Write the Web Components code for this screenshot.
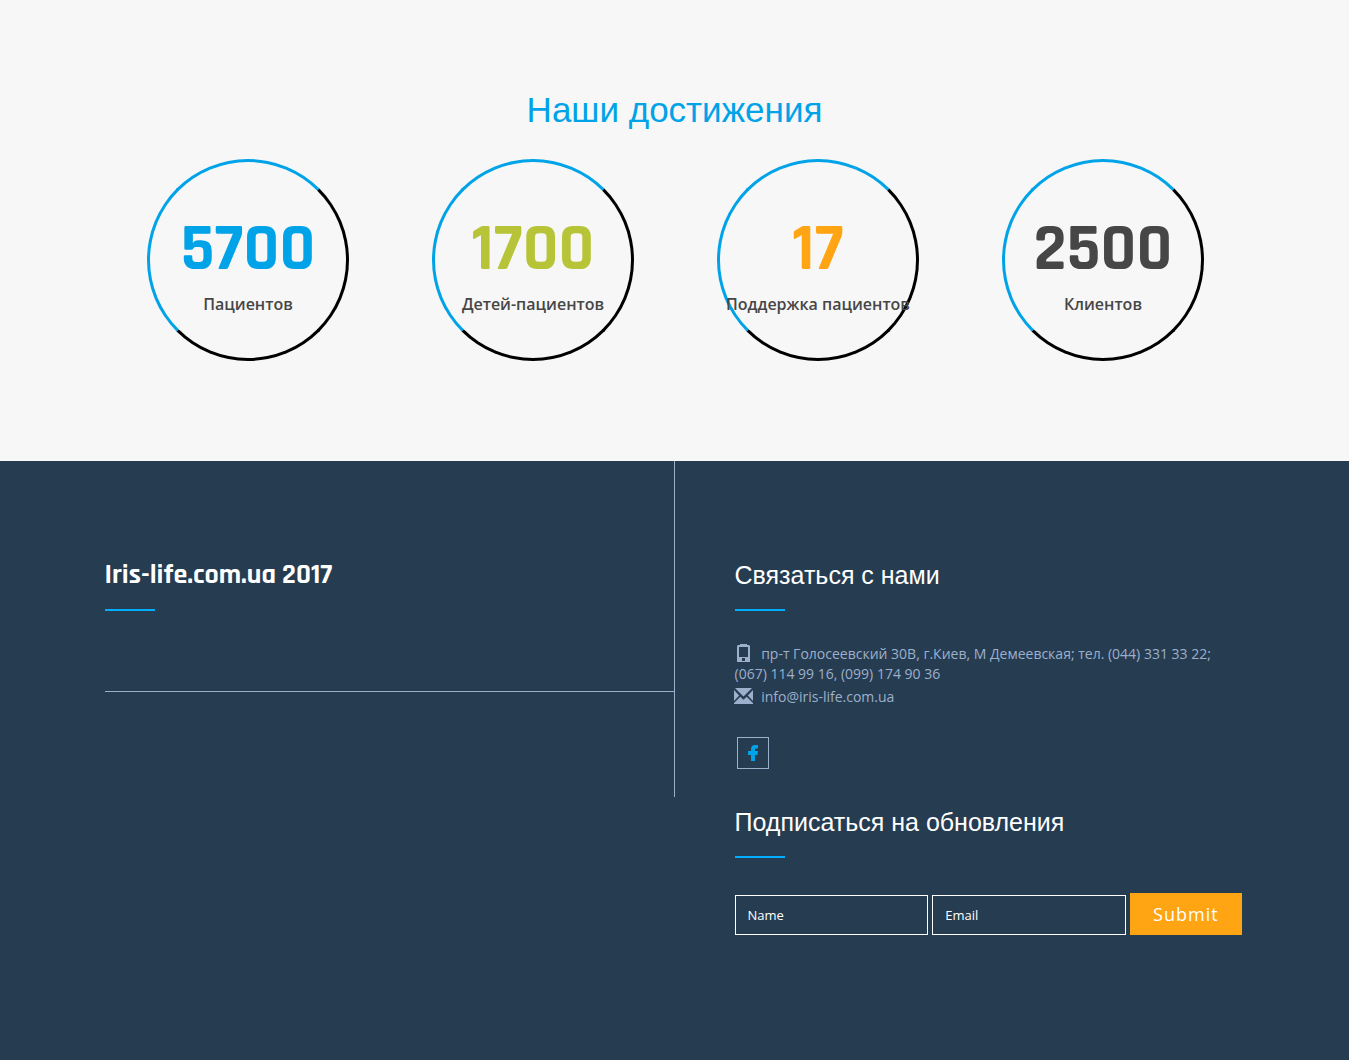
<!DOCTYPE html>
<html lang="ru">
<head>
<meta charset="utf-8">
<meta name="viewport" content="width=device-width, initial-scale=1">
<title>Iris-life.com.ua</title>
<style>
  body {
    margin: 0;
    min-height: 100vh;
    background: #263c51;
    color: #9cb0cb;
    font: 14px/20px "Open Sans", sans-serif;
  }
</style>
</head>
<body>
<achievements-section heading="Наши достижения">
  <stat-circle value="5700" color="#00a3e8">Пациентов</stat-circle>
  <stat-circle value="1700" color="#b7c438">Детей-пациентов</stat-circle>
  <stat-circle value="17" color="#ffa412">Поддержка пациентов</stat-circle>
  <stat-circle value="2500" color="#464646">Клиентов</stat-circle>
</achievements-section>

<site-footer>
  <footer-heading slot="brand" brand>Iris-life.com.ua 2017</footer-heading>
  <footer-heading>Связаться с нами</footer-heading>
  <contact-list></contact-list>
  <footer-heading>Подписаться на обновления</footer-heading>
  <subscribe-form></subscribe-form>
</site-footer>

<script>
class AchievementsSection extends HTMLElement {
  connectedCallback() {
    this.attachShadow({ mode: 'open' });
    this.shadowRoot.innerHTML = `
      <style>
        :host {
          display: block;
          padding: 90px 0 100px;
          background: #f7f7f7;
        }
        h2 {
          margin: 0 0 29px;
          color: #00a3e8;
          font: 400 35px/40px "Liberation Sans", Arial, sans-serif;
          text-align: center;
        }
        .stats {
          display: grid;
          grid-template-columns: repeat(auto-fit, minmax(240px, 1fr));
          max-width: 1140px;
          margin: 0 auto;
          padding-left: 2px;
          justify-items: center;
        }
      </style>
      <h2>${this.getAttribute('heading')}</h2>
      <div class="stats"><slot></slot></div>
    `;
  }
}

class StatCircle extends HTMLElement {
  connectedCallback() {
    this.attachShadow({ mode: 'open' });
    this.shadowRoot.innerHTML = `
      <style>
        :host {
          display: flex;
          flex-direction: column;
          align-items: center;
          box-sizing: border-box;
          width: 202px;
          height: 202px;
          padding-top: 58px;
          border: 3px solid;
          border-color: #00a3e8 #000 #000 #00a3e8;
          border-radius: 50%;
          color: #464646;
        }
        .value {
          color: ${this.getAttribute('color')};
          font: 700 67px/60px Rajdhani, Roboto, sans-serif;
        }
        .label {
          margin-top: 12px;
          font-size: 16px;
          font-weight: 600;
          line-height: 24px;
          white-space: nowrap;
        }
      </style>
      <span class="value">${this.getAttribute('value')}</span>
      <span class="label"><slot></slot></span>
    `;
  }
}

class SiteFooter extends HTMLElement {
  connectedCallback() {
    this.attachShadow({ mode: 'open' });
    this.shadowRoot.innerHTML = `
      <style>
        :host {
          display: block;
          background: #263c51;
        }
        footer {
          display: grid;
          grid-template-columns: 1fr 1fr;
          align-items: start;
          max-width: 1140px;
          margin: 0 auto;
        }
        .left {
          padding-bottom: 105px;
          border-right: 1px solid #9cb0cb;
        }
        .brand {
          padding: 100px 0 80px;
          border-bottom: 1px solid #9cb0cb;
        }
        .right {
          padding: 100px 0 123px 60px;
        }
      </style>
      <footer>
        <div class="left">
          <div class="brand"><slot name="brand"></slot></div>
        </div>
        <div class="right"><slot></slot></div>
      </footer>
    `;
  }
}

class FooterHeading extends HTMLElement {
  connectedCallback() {
    this.attachShadow({ mode: 'open' });
    this.shadowRoot.innerHTML = `
      <style>
        :host {
          display: block;
        }
        h3 {
          margin: 0;
          color: #fff;
          font: 400 25px/28px "Liberation Sans", Arial, sans-serif;
        }
        :host([brand]) h3 {
          font: 700 28px/28px Rajdhani, Roboto, sans-serif;
        }
        h3::after {
          content: "";
          display: block;
          width: 50px;
          height: 2px;
          margin-top: 20px;
          background: #00aeff;
        }
      </style>
      <h3><slot></slot></h3>
    `;
  }
}

class ContactList extends HTMLElement {
  connectedCallback() {
    this.attachShadow({ mode: 'open' });
    this.shadowRoot.innerHTML = `
      <style>
        :host {
          display: block;
          padding: 32px 0 39px;
        }
        p {
          margin: 0 0 2px;
        }
        .icon {
          width: 19px;
          height: 20px;
          margin: 0 5px 0 -1px;
          vertical-align: -4px;
          fill: currentColor;
        }
        a {
          color: inherit;
          text-decoration: none;
        }
        .social {
          display: flex;
          width: 30px;
          height: 30px;
          margin: 30px 0 0 2px;
          border: 1px solid #9cb0cb;
          align-items: center;
          justify-content: center;
        }
        .social svg {
          fill: #00a3e8;
        }
      </style>
      <p>
        <svg class="icon" viewBox="0 0 19 20" aria-hidden="true">
          <path fill-rule="evenodd" d="M6 1h7v1h2l1 1v16H3V3l1-1h2zM5 4v10h9V4zM8 15v3h3v-3z"/>
        </svg>
        пр-т Голосеевский 30В, г.Киев, М Демеевская; тел. (044) 331 33 22; (067) 114 99 16, (099) 174 90 36
      </p>
      <p>
        <svg class="icon" viewBox="0 0 19 20" aria-hidden="true">
          <path d="M1 2h17l-8.500 8.500zM0 4l5.200 5.500L0 15zM19 4v11l-5.200-5.500zM6.300 10.800l3.200 3 3.200-3L19 17v1H0v-1z"/>
        </svg>
        <a href="mailto:info@iris-life.com.ua">info@iris-life.com.ua</a>
      </p>
      <a class="social" href="#" aria-label="Facebook">
        <svg width="10" height="16" viewBox="0 0 10 16" aria-hidden="true">
          <path d="M10 0v3.600H8C7.200 3.600 7 4 7 4.600V6h3l-.5 4H7v6H3v-6H0V6h3V4C3 1.400 4.600 0 7 0z"/>
        </svg>
      </a>
    `;
  }
}

class SubscribeForm extends HTMLElement {
  connectedCallback() {
    this.attachShadow({ mode: 'open' });
    this.shadowRoot.innerHTML = `
      <style>
        :host {
          display: block;
          padding-top: 35px;
        }
        form {
          display: flex;
          align-items: flex-end;
          gap: 4px;
        }
        input {
          box-sizing: border-box;
          width: 38%;
          min-width: 0;
          height: 40px;
          padding: 0 12px;
          border: 1px solid #fff;
          border-radius: 0;
          background: transparent;
          color: #fff;
          font: 13px "Open Sans", sans-serif;
        }
        input::placeholder {
          color: #fff;
          opacity: 1;
        }
        button {
          height: 42px;
          padding: 0 23px;
          border: 0;
          background: #ffa412;
          color: #fff;
          font: 18px "Open Sans", sans-serif;
          letter-spacing: 1px;
        }
      </style>
      <form>
        <input type="text" name="name" placeholder="Name" aria-label="Name">
        <input type="email" name="email" placeholder="Email" aria-label="Email">
        <button type="submit">Submit</button>
      </form>
    `;
  }
}

customElements.define('achievements-section', AchievementsSection);
customElements.define('stat-circle', StatCircle);
customElements.define('site-footer', SiteFooter);
customElements.define('footer-heading', FooterHeading);
customElements.define('contact-list', ContactList);
customElements.define('subscribe-form', SubscribeForm);
</script>
</body>
</html>
